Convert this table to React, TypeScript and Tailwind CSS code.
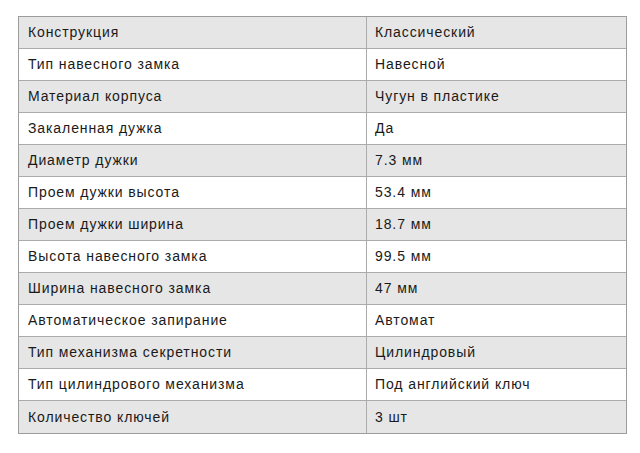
import React from 'react';

const rows: [string, string][] = [
  ['Конструкция', 'Классический'],
  ['Тип навесного замка', 'Навесной'],
  ['Материал корпуса', 'Чугун в пластике'],
  ['Закаленная дужка', 'Да'],
  ['Диаметр дужки', '7.3 мм'],
  ['Проем дужки высота', '53.4 мм'],
  ['Проем дужки ширина', '18.7 мм'],
  ['Высота навесного замка', '99.5 мм'],
  ['Ширина навесного замка', '47 мм'],
  ['Автоматическое запирание', 'Автомат'],
  ['Тип механизма секретности', 'Цилиндровый'],
  ['Тип цилиндрового механизма', 'Под английский ключ'],
  ['Количество ключей', '3 шт'],
];

export default function App() {
  return (
    <div className="w-[640px] h-[453px] bg-white pt-[16px] pl-[18px] font-['Liberation_Sans',Arial,sans-serif] text-[14px] tracking-[0.9px] text-[#1a1a1a]">
      <div className="w-[609px] border border-[#9c9c9c]">
        {rows.map(([name, value], i) => (
          <div
            key={name}
            className={`flex h-[32px] ${i < rows.length - 1 ? 'border-b border-[#ababab]' : ''} ${
              i % 2 === 0 ? 'bg-[#e6e6e6]' : 'bg-white'
            }`}
          >
            <div className="w-[348px] flex items-center pl-[9px] border-r border-[#ababab]">{name}</div>
            <div className="flex-1 flex items-center pl-[8px]">{value}</div>
          </div>
        ))}
      </div>
    </div>
  );
}
